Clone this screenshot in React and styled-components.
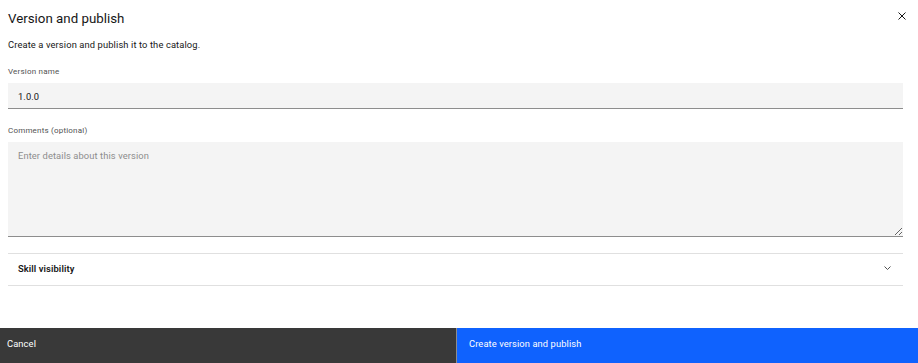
import React from "react";
import styled, { createGlobalStyle } from "styled-components";

const Global = createGlobalStyle`
  html, body { margin: 0; padding: 0; background: #ffffff; }
  body { font-family: Roboto, "Liberation Sans", sans-serif; color: #161616; }
  * { box-sizing: border-box; }
`;

const Modal = styled.div`
  width: 918px;
  height: 363px;
  display: flex;
  flex-direction: column;
  background: #ffffff;
  overflow: hidden;
`;

const Header = styled.header`
  display: flex;
  justify-content: space-between;
  align-items: flex-start;
  padding: 10px 12px 0 8px;
`;

const Title = styled.h2`
  margin: 0;
  font-size: 13.3px;
  line-height: 18px;
  font-weight: 400;
  color: #161616;
`;

const CloseButton = styled.button`
  width: 8px;
  height: 8px;
  margin-top: 2px;
  padding: 0;
  border: 0;
  background: transparent;
  display: flex;
  cursor: pointer;
`;

const Body = styled.div`
  flex: 1;
  padding: 0 15px 0 8px;
  display: flex;
  flex-direction: column;
`;

const Intro = styled.p`
  margin: 10px 0 0;
  font-size: 9.33px;
  line-height: 13px;
  color: #161616;
  letter-spacing: 0.12px;
`;

const FormItem = styled.div`
  display: flex;
  flex-direction: column;
  margin-top: ${(p) => p.$gap}px;
`;

const Label = styled.label`
  font-size: 8px;
  line-height: 10.7px;
  color: #525252;
  letter-spacing: 0.2px;
  margin-bottom: 5.3px;
`;

const TextInput = styled.input`
  height: 26px;
  width: 100%;
  border: 0;
  border-bottom: 1px solid #8d8d8d;
  background: #f4f4f4;
  padding: 2px 10px 0;
  font-family: inherit;
  font-size: 9.33px;
  color: #161616;
  letter-spacing: 0.1px;
  outline: none;
`;

const TextArea = styled.textarea`
  height: 95px;
  width: 100%;
  border: 0;
  border-bottom: 1px solid #8d8d8d;
  background: #f4f4f4;
  padding: 7px 10px;
  font-family: inherit;
  font-size: 9.33px;
  line-height: 13px;
  color: #161616;
  letter-spacing: 0.1px;
  resize: vertical;
  outline: none;
  display: block;
  &::placeholder { color: #8d8d8d; opacity: 1; }
`;

const Accordion = styled.div`
  margin-top: 16px;
  border-top: 1px solid #e0e0e0;
  border-bottom: 1px solid #e0e0e0;
`;

const AccordionHeading = styled.button`
  width: 100%;
  height: 31px;
  display: flex;
  align-items: center;
  justify-content: space-between;
  padding: 0 12px 3px 10px;
  border: 0;
  background: transparent;
  font-family: inherit;
  font-size: 9.33px;
  font-weight: 600;
  color: #161616;
  letter-spacing: 0.1px;
  cursor: pointer;
`;

const Footer = styled.footer`
  display: flex;
  height: 35px;
  background: #8d8d8d;
  gap: 1px;
`;

const FooterButton = styled.button`
  flex: ${(p) => (p.$primary ? "1" : "0 0 456px")};
  border: 0;
  margin: 0;
  background: ${(p) => (p.$primary ? "#0f62fe" : "#393939")};
  color: #ffffff;
  font-family: inherit;
  font-size: 9.33px;
  letter-spacing: 0.1px;
  text-align: left;
  padding: ${(p) => (p.$primary ? "10px 12px" : "10px 7px")};
  display: flex;
  align-items: flex-start;
  cursor: pointer;
`;

export default function App() {
  return (
    <>
      <Global />
      <Modal>
        <Header>
          <Title>Version and publish</Title>
          <CloseButton aria-label="Close">
            <svg width="8" height="8" viewBox="0 0 8 8">
              <path d="M0.5 0.5 L7.5 7.5 M7.5 0.5 L0.5 7.5" stroke="#161616" strokeWidth="1" fill="none" />
            </svg>
          </CloseButton>
        </Header>
        <Body>
          <Intro>Create a version and publish it to the catalog.</Intro>
          <FormItem $gap={16}>
            <Label>Version name</Label>
            <TextInput defaultValue="1.0.0" />
          </FormItem>
          <FormItem $gap={17}>
            <Label>Comments (optional)</Label>
            <TextArea placeholder="Enter details about this version" />
          </FormItem>
          <Accordion>
            <AccordionHeading>
              <span>Skill visibility</span>
              <svg width="7" height="4" viewBox="0 0 7 4">
                <path d="M0.5 0.5 L3.5 3.5 L6.5 0.5" stroke="#525252" strokeWidth="1" fill="none" />
              </svg>
            </AccordionHeading>
          </Accordion>
        </Body>
        <Footer>
          <FooterButton>Cancel</FooterButton>
          <FooterButton $primary>Create version and publish</FooterButton>
        </Footer>
      </Modal>
    </>
  );
}
